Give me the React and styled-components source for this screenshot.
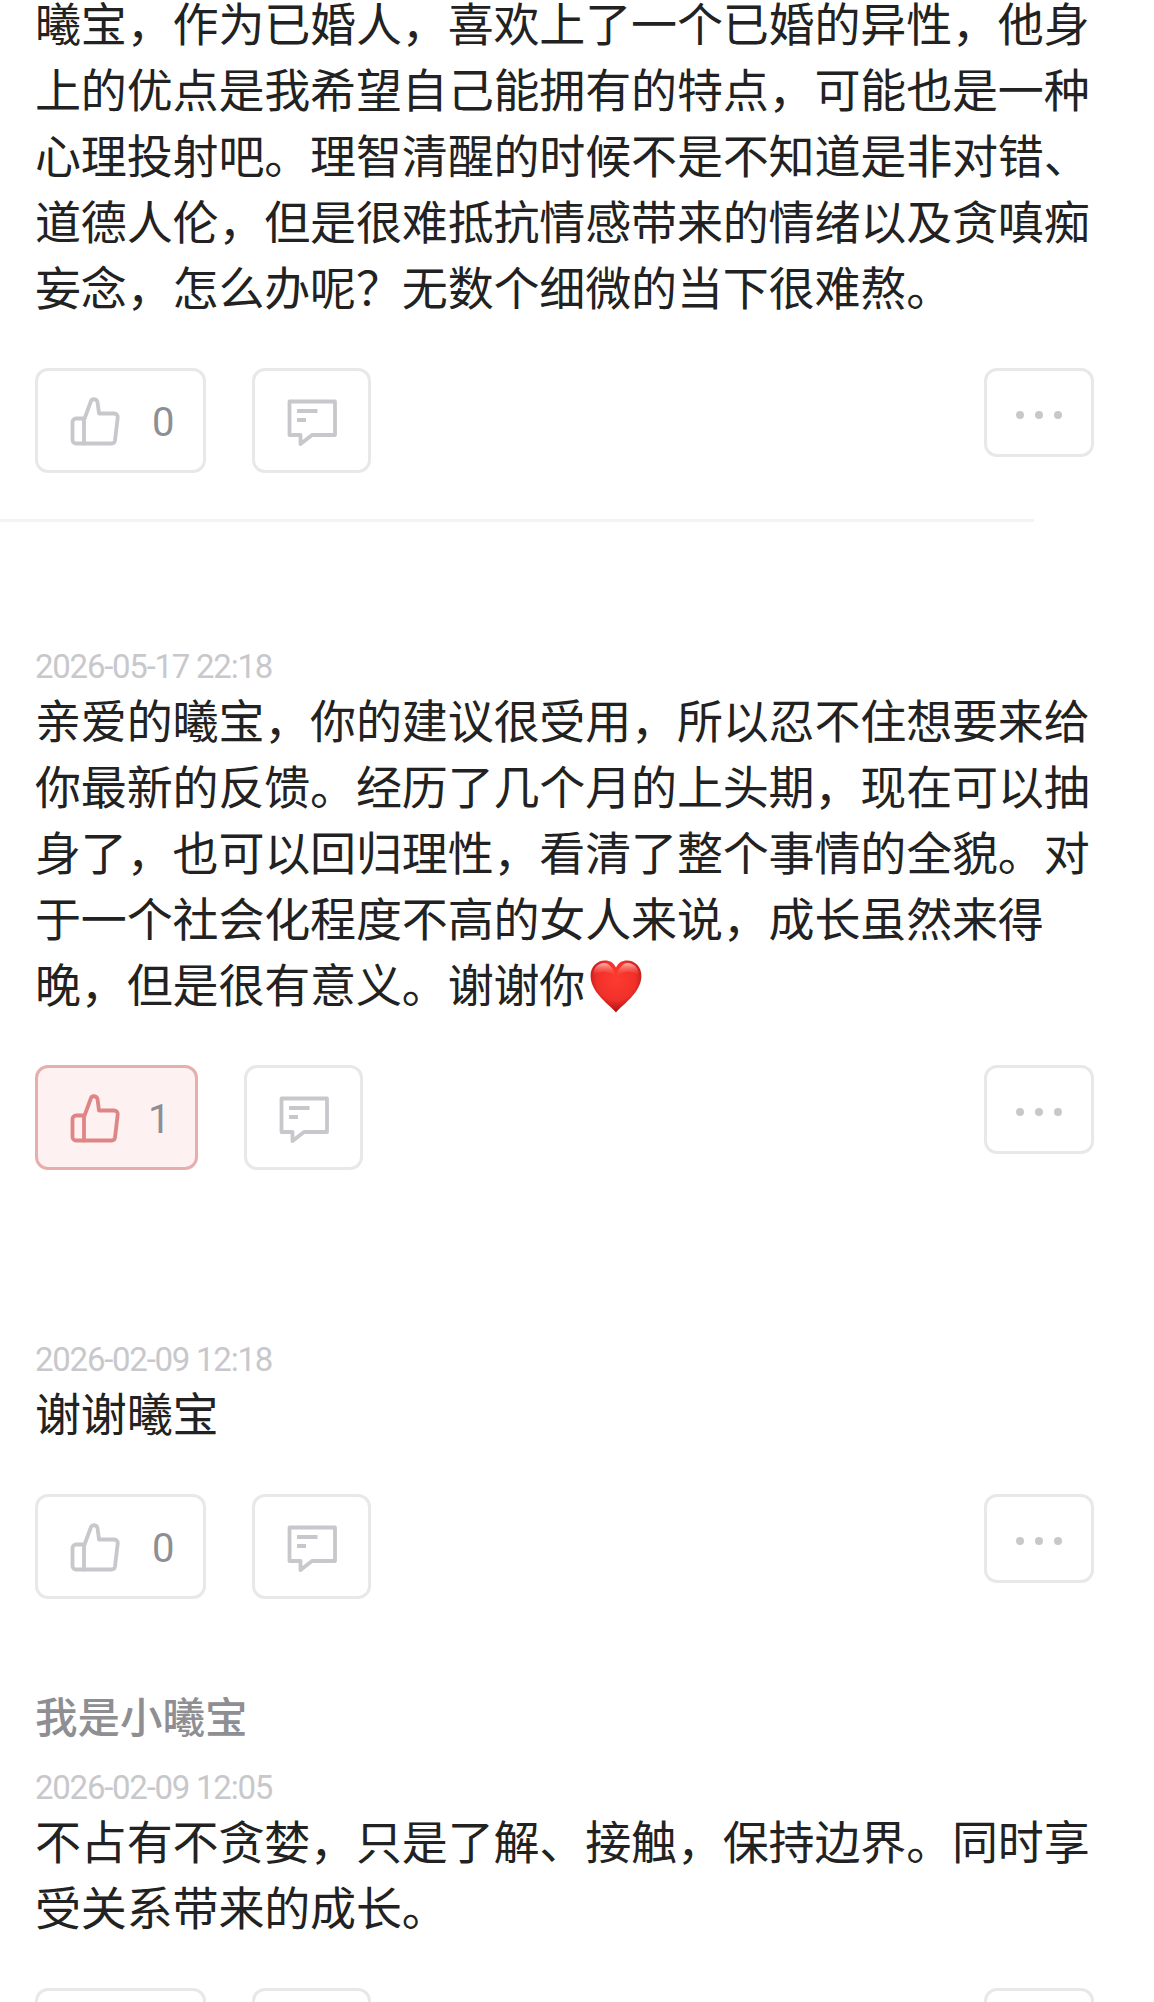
import React from "react";
import styled, { createGlobalStyle } from "styled-components";

const GlobalStyle = createGlobalStyle`
  html, body {
    margin: 0;
    padding: 0;
    background: #ffffff;
  }
`;

const comments = [
  {
    id: 1,
    top: -12,
    body: "曦宝，作为已婚人，喜欢上了一个已婚的异性，他身上的优点是我希望自己能拥有的特点，可能也是一种心理投射吧。理智清醒的时候不是不知道是非对错、道德人伦，但是很难抵抗情感带来的情绪以及贪嗔痴妄念，怎么办呢？无数个细微的当下很难熬。",
    likes: 0,
  },
  {
    id: 2,
    top: 125,
    date: "2026-05-17 22:18",
    body: "亲爱的曦宝，你的建议很受用，所以忍不住想要来给你最新的反馈。经历了几个月的上头期，现在可以抽身了，也可以回归理性，看清了整个事情的全貌。对于一个社会化程度不高的女人来说，成长虽然来得晚，但是很有意义。谢谢你",
    heart: true,
    likes: 1,
    liked: true,
  },
  {
    id: 3,
    top: 170,
    date: "2026-02-09 12:18",
    body: "谢谢曦宝",
    likes: 0,
  },
  {
    id: 4,
    top: 88,
    name: "我是小曦宝",
    date: "2026-02-09 12:05",
    body: "不占有不贪婪，只是了解、接触，保持边界。同时享受关系带来的成长。",
    likes: 0,
  },
];

function ThumbIcon() {
  return (
    <ThumbSvg width="50" height="50" viewBox="0 0 50 50" fill="none" stroke="currentColor" strokeWidth="3.8" strokeLinejoin="round" strokeLinecap="round">
      <path d="M14 22.5H6a3.5 3.5 0 0 0-3.5 3.5v18a3.5 3.5 0 0 0 3.5 3.5h8" />
      <path d="M14 47.5V24L21 5c1-2.500 5.500-2.500 6.500 1L29 17.500h15c2.500 0 4 2 3.700 4L45 44.500c-.3 2-1.500 3-3.500 3z" />
    </ThumbSvg>
  );
}

function BubbleIcon() {
  return (
    <svg width="52" height="50" viewBox="0 0 52 50" fill="none" stroke="#c8c8cc" strokeWidth="3.8" strokeLinejoin="round">
      <path d="M3.500 37V3.500H49V37H26L14.500 46V37z" />
      <path d="M11 13H31.500M11 22H20" />
    </svg>
  );
}

function Heart() {
  return (
    <HeartSvg width="52" height="53" viewBox="0 0 52 53">
      <defs>
        <radialGradient id="heartFill" cx="50%" cy="38%" r="62%">
          <stop offset="0%" stopColor="#ff3b2f" />
          <stop offset="62%" stopColor="#f0302a" />
          <stop offset="100%" stopColor="#a80f12" />
        </radialGradient>
        <linearGradient id="heartShine" x1="0" y1="0" x2="0" y2="1">
          <stop offset="0%" stopColor="#ffc4bc" stopOpacity="0.9" />
          <stop offset="100%" stopColor="#ff5a4e" stopOpacity="0" />
        </linearGradient>
      </defs>
      <path
        d="M26 52.500C20 45 1 33 .6 16.500.3 6.500 7.500.6 15 .6c5 0 8.800 2.600 11 7 2.200-4.400 6-7 11-7 7.500 0 14.700 5.900 14.400 15.900C51 33 32 45 26 52.500z"
        fill="url(#heartFill)"
      />
      <path
        d="M26 16C23.500 9 19.500 3 14.500 3 8 3 3 8.500 3.200 15c4-3 9-4 13-3 4 .8 7 2 9.800 4zM26 16c2.800-2 5.800-3.200 9.800-4 4-1 9 0 13 3 .2-6.500-4.800-12-11.300-12C32.500 3 28.500 9 26 16z"
        fill="url(#heartShine)"
      />
    </HeartSvg>
  );
}

function CommentBlock({ item }) {
  return (
    <Comment $top={item.top}>
      {item.name && <Author>{item.name}</Author>}
      {item.date && <DateLine>{item.date}</DateLine>}
      <Body>
        {item.body}
        {item.heart && <Heart />}
      </Body>
      <Actions>
        <LikeButton $active={item.liked}>
          <ThumbIcon />
          <Count>{item.likes}</Count>
        </LikeButton>
        <ReplyButton>
          <BubbleIcon />
        </ReplyButton>
        <MoreButton>
          <Dot />
          <Dot />
          <Dot />
        </MoreButton>
      </Actions>
    </Comment>
  );
}

export default function App() {
  return (
    <Page lang="zh-CN">
      <GlobalStyle />
      <CommentBlock item={comments[0]} />
      <Divider />
      {comments.slice(1).map((item) => (
        <CommentBlock key={item.id} item={item} />
      ))}
    </Page>
  );
}

const Page = styled.div`
  height: 2002px;
  overflow: hidden;
  background: #ffffff;
  font-family: "Noto Sans CJK SC", "Noto Sans", sans-serif;
`;

const Comment = styled.section`
  margin-top: ${(p) => p.$top}px;
  padding: 0 36px 0 35px;
`;

const Author = styled.div`
  height: 56px;
  margin-bottom: 25px;
  font-size: 42.5px;
  line-height: 56px;
  font-weight: 500;
  color: #8e8e93;
`;

const DateLine = styled.div`
  height: 40px;
  margin-bottom: -2px;
  font-family: Roboto, "Liberation Sans", sans-serif;
  font-size: 33px;
  line-height: 40px;
  letter-spacing: -1.25px;
  color: #c8c8cc;
`;

const Body = styled.p`
  margin: 0;
  font-size: 46px;
  line-height: 66px;
  letter-spacing: -0.15px;
  color: #222222;
`;

const HeartSvg = styled.svg`
  margin-left: 5px;
  vertical-align: -11px;
`;

const ThumbSvg = styled.svg`
  margin-top: -4px;
`;

const Actions = styled.div`
  display: flex;
  align-items: flex-start;
  margin-top: 50px;
  padding-right: 24px;
`;

const ActionBox = styled.button`
  display: flex;
  align-items: center;
  box-sizing: border-box;
  height: 105px;
  padding: 4px 0 0;
  background: #ffffff;
  border: 3px solid #e8e8ea;
  border-radius: 13px;
`;

const LikeButton = styled(ActionBox)`
  width: ${(p) => (p.$active ? 163 : 171)}px;
  padding-left: 32px;
  gap: ${(p) => (p.$active ? 28 : 32)}px;
  color: ${(p) => (p.$active ? "#e08585" : "#c8c8cc")};
  background: ${(p) => (p.$active ? "#fdf1f2" : "#ffffff")};
  border-color: ${(p) => (p.$active ? "#e6afae" : "#e8e8ea")};
`;

const Count = styled.span`
  font-family: Roboto, "Liberation Sans", sans-serif;
  font-size: 40px;
  line-height: 1;
  color: #8e8e93;
`;

const ReplyButton = styled(ActionBox)`
  justify-content: center;
  width: 119px;
  margin-left: 46px;
`;

const MoreButton = styled(ActionBox)`
  justify-content: center;
  gap: 11px;
  width: 110px;
  height: 89px;
  margin-left: auto;
`;

const Dot = styled.span`
  width: 8px;
  height: 8px;
  border-radius: 50%;
  background: #c8c8cc;
`;

const Divider = styled.hr`
  width: 1034px;
  height: 3px;
  margin: 46px 0 0;
  border: 0;
  background: #f3f3f4;
`;
